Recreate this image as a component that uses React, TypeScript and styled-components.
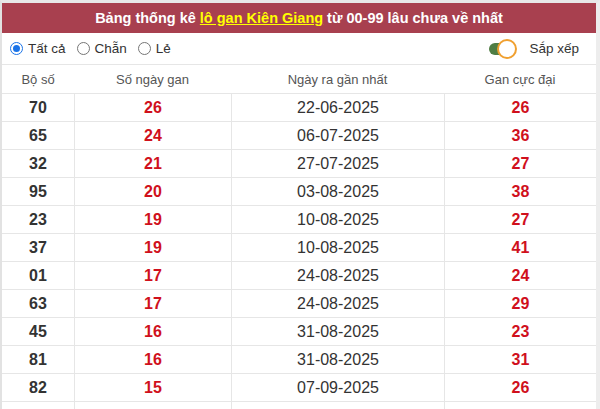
import React from "react";
import styled, { createGlobalStyle } from "styled-components";

const Global = createGlobalStyle`
  html, body { margin: 0; padding: 0; background: #fff; }
  body { font-family: "Liberation Sans", Arial, sans-serif; }
`;

const Frame = styled.div`
  width: 600px;
  box-sizing: border-box;
  border-top: 3px solid #e8e8e8;
  border-left: 2px solid #e2e2e2;
  border-right: 4px solid #ededed;
  background: #fff;
`;

const Title = styled.div`
  height: 30px;
  background: #a8404f;
  color: #fff;
  font-weight: bold;
  font-size: 14.5px;
  display: flex;
  align-items: center;
  justify-content: center;
`;

const TitleLink = styled.a`
  color: #ffff00;
  text-decoration: underline;
  margin: 0 4px;
`;

const Filters = styled.div`
  height: 32px;
  box-sizing: border-box;
  border-bottom: 1px solid #e6e6e6;
  display: flex;
  align-items: center;
  padding: 0 8px;
  font-size: 13.5px;
  color: #333;
`;

const RadioItem = styled.label`
  display: flex;
  align-items: center;
  gap: 5px;
  margin-right: 11px;
`;

const RadioDot = styled.span<{ $on?: boolean }>`
  width: 13px;
  height: 13px;
  box-sizing: border-box;
  border-radius: 50%;
  border: 1px solid ${(p) => (p.$on ? "#1a73e8" : "#767676")};
  display: flex;
  align-items: center;
  justify-content: center;
  &::after {
    content: "";
    width: 7px;
    height: 7px;
    border-radius: 50%;
    background: ${(p) => (p.$on ? "#1a73e8" : "transparent")};
  }
`;

const Spacer = styled.div`
  flex: 1;
`;

const Toggle = styled.span`
  position: relative;
  width: 24px;
  height: 12px;
  border-radius: 6px;
  background: #4f7d43;
  margin-right: 16px;
`;

const Knob = styled.span`
  position: absolute;
  left: 8px;
  top: -4px;
  width: 20px;
  height: 20px;
  box-sizing: border-box;
  border-radius: 50%;
  background: #fff;
  border: 2px solid #f0a030;
`;

const SortLabel = styled.span`
  margin-right: 9px;
`;

const Table = styled.div`
  display: grid;
  grid-template-columns: 72px 157px 213px 1fr;
`;

const HeadCell = styled.div`
  height: 29px;
  box-sizing: border-box;
  border-bottom: 1px solid #e6e6e6;
  display: flex;
  align-items: center;
  justify-content: center;
  font-size: 13px;
  color: #555;
`;

const Cell = styled.div<{ $red?: boolean; $bold?: boolean; $first?: boolean }>`
  height: 28px;
  box-sizing: border-box;
  border-bottom: 1px solid #e6e6e6;
  border-left: ${(p) => (p.$first ? "none" : "1px solid #e6e6e6")};
  display: flex;
  align-items: center;
  justify-content: center;
  font-size: 16px;
  font-weight: ${(p) => (p.$bold ? "bold" : "normal")};
  color: ${(p) => (p.$red ? "#d0101c" : "#333")};
`;

const rows: [string, string, string, string][] = [
  ["70", "26", "22-06-2025", "26"],
  ["65", "24", "06-07-2025", "36"],
  ["32", "21", "27-07-2025", "27"],
  ["95", "20", "03-08-2025", "38"],
  ["23", "19", "10-08-2025", "27"],
  ["37", "19", "10-08-2025", "41"],
  ["01", "17", "24-08-2025", "24"],
  ["63", "17", "24-08-2025", "29"],
  ["45", "16", "31-08-2025", "23"],
  ["81", "16", "31-08-2025", "31"],
  ["82", "15", "07-09-2025", "26"],
  ["", "", "", ""],
];

export default function App() {
  return (
    <>
      <Global />
      <Frame>
        <Title>
          Bảng thống kê<TitleLink>lô gan Kiên Giang</TitleLink>từ 00-99 lâu chưa về nhất
        </Title>
        <Filters>
          <RadioItem>
            <RadioDot $on />
            Tất cả
          </RadioItem>
          <RadioItem>
            <RadioDot />
            Chẵn
          </RadioItem>
          <RadioItem>
            <RadioDot />
            Lẻ
          </RadioItem>
          <Spacer />
          <Toggle>
            <Knob />
          </Toggle>
          <SortLabel>Sắp xếp</SortLabel>
        </Filters>
        <Table>
          <HeadCell>Bộ số</HeadCell>
          <HeadCell>Số ngày gan</HeadCell>
          <HeadCell>Ngày ra gần nhất</HeadCell>
          <HeadCell>Gan cực đại</HeadCell>
          {rows.map((r, i) => (
            <React.Fragment key={i}>
              <Cell $first $bold>{r[0]}</Cell>
              <Cell $bold $red>{r[1]}</Cell>
              <Cell>{r[2]}</Cell>
              <Cell $bold $red>{r[3]}</Cell>
            </React.Fragment>
          ))}
        </Table>
      </Frame>
    </>
  );
}
